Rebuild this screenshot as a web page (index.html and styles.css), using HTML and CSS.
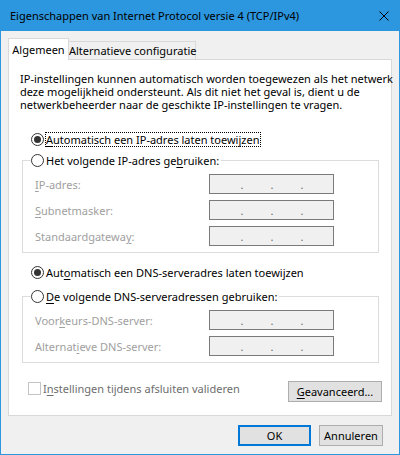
FILE: index.html
```html
<!DOCTYPE html>
<html lang="nl">
<head>
<meta charset="utf-8">
<title>Eigenschappen van Internet Protocol versie 4 (TCP/IPv4)</title>
<link rel="stylesheet" href="styles.css">
</head>
<body>
<div class="window">
  <div class="titlebar">
    <span class="title">Eigenschappen van Internet Protocol versie 4 (TCP/IPv4)</span>
    <svg class="close" width="10" height="10" viewBox="0 0 10 10"><path d="M0.5 0.5 L9.5 9.5 M9.5 0.5 L0.5 9.5" stroke="#000" stroke-width="1" fill="none"/></svg>
  </div>
  <div class="client">
    <div class="tabs">
      <div class="tab active">Algemeen</div>
      <div class="tab">Alternatieve configuratie</div>
    </div>
    <div class="panel">
      <p class="intro">IP-instellingen kunnen automatisch worden toegewezen als het netwerk<br>deze mogelijkheid ondersteunt. Als dit niet het geval is, dient u de<br>netwerkbeheerder naar de geschikte IP-instellingen te vragen.</p>

      <div class="radio-row"><span class="radio checked"></span><span class="focus"><u>A</u>utomatisch een IP-adres laten toewijzen</span></div>

      <fieldset class="group">
        <legend><span class="radio"></span><span>Het volgende IP-adres ge<u>b</u>ruiken:</span></legend>
        <div class="field"><span class="label"><u>I</u>P-adres:</span><span class="ipbox"><span>.</span><span>.</span><span>.</span></span></div>
        <div class="field"><span class="label"><u>S</u>ubnetmasker:</span><span class="ipbox"><span>.</span><span>.</span><span>.</span></span></div>
        <div class="field"><span class="label">Standaardgatewa<u>y</u>:</span><span class="ipbox"><span>.</span><span>.</span><span>.</span></span></div>
      </fieldset>

      <div class="radio-row dns"><span class="radio checked"></span><span>Aut<u>o</u>matisch een DNS-serveradres laten toewijzen</span></div>

      <fieldset class="group second">
        <legend><span class="radio"></span><span><u>D</u>e volgende DNS-serveradressen gebruiken:</span></legend>
        <div class="field"><span class="label">Voor<u>k</u>eurs-DNS-server:</span><span class="ipbox"><span>.</span><span>.</span><span>.</span></span></div>
        <div class="field"><span class="label">Alternat<u>i</u>eve DNS-server:</span><span class="ipbox"><span>.</span><span>.</span><span>.</span></span></div>
      </fieldset>

      <div class="bottom-row">
        <div class="check-row"><span class="checkbox"></span><span class="check-label">I<u>n</u>stellingen tijdens afsluiten valideren</span></div>
        <div class="btn adv"><u>G</u>eavanceerd...</div>
      </div>
    </div>
    <div class="footer">
      <div class="btn ok">OK</div>
      <div class="btn cancel">Annuleren</div>
    </div>
  </div>
</div>
</body>
</html>
```

FILE: styles.css
```css
* { box-sizing: border-box; }
html, body { margin: 0; padding: 0; }
body {
  width: 400px;
  height: 455px;
  font-family: "Noto Sans", "Open Sans", sans-serif;
  font-size: 11px;
  color: #000;
  background: #fff;
  overflow: hidden;
  white-space: nowrap;
}
u { text-decoration: underline; text-underline-offset: 2px; }

.window {
  width: 400px;
  height: 455px;
  border: 1px solid #2c96de;
  border-top: 0;
  background: #f0f0f0;
  display: flex;
  flex-direction: column;
}
.titlebar {
  height: 31px;
  flex: none;
  background: #2c96de;
  display: flex;
  align-items: center;
  justify-content: space-between;
  padding: 0 10px 0 9px;
}
.title { font-size: 11px; line-height: 14px; }
.close { display: block; }

.client { padding: 7px 7px 0 7px; }

.tabs {
  display: flex;
  align-items: flex-end;
  height: 21px;
}
.tab {
  height: 18px;
  width: 127px;
  border: 1px solid #d9d9d9;
  border-left: 0;
  border-bottom: 0;
  background: #f0f0f0;
  text-align: center;
  line-height: 17px;
}
.tab.active {
  position: relative;
  z-index: 1;
  width: 61px;
  height: 22px;
  margin-bottom: -1px;
  border-left: 1px solid #d9d9d9;
  background: #fff;
  line-height: 21px;
}

.panel {
  height: 357px;
  background: #fff;
  border: 1px solid #d9d9d9;
  display: flex;
  flex-direction: column;
}
.intro {
  margin: 12px 0 0 11px;
  line-height: 13px;
}
.radio-row {
  margin: 18px 0 0 22px;
  height: 20px;
  display: flex;
  align-items: center;
}
.radio-row.dns { margin-top: 9px; }
.radio {
  width: 13px;
  height: 13px;
  border: 1px solid #333;
  border-radius: 50%;
  background: #fff;
  margin-right: 2px;
  flex: none;
  display: flex;
  align-items: center;
  justify-content: center;
}
.radio.checked::after {
  content: "";
  width: 7px;
  height: 7px;
  border-radius: 50%;
  background: #333;
}
.focus {
  outline: 1px dotted #000;
  outline-offset: 0;
  line-height: 13px;
  padding: 0 1px 0 0;
}

.group {
  margin: 1px 12px 0 13px;
  border: 1px solid #dcdcdc;
  padding: 4px 0 6px 12px;
  min-inline-size: 0;
}
.group.second { margin-top: 4px; }
.group legend {
  padding: 0 2px 0 0;
  margin-left: -4px;
  height: 20px;
  display: flex;
  align-items: center;
}
.field {
  display: flex;
  align-items: center;
  height: 20px;
  color: #a0a0a0;
}
.field + .field { margin-top: 6px; }
.label { width: 174px; flex: none; }
.ipbox {
  width: 125px;
  height: 20px;
  border: 1px solid #7a7a7a;
  background: #f0f0f0;
  display: flex;
  padding-left: 17px;
  color: #6d6d6d;
  line-height: 19px;
}
.ipbox span { width: 30px; text-align: center; }

.bottom-row {
  margin: 18px 9px 0 19px;
  display: flex;
  justify-content: space-between;
  align-items: flex-start;
}
.check-row {
  display: flex;
  align-items: center;
  height: 13px;
  margin-top: 1px;
}
.checkbox {
  width: 13px;
  height: 13px;
  border: 1px solid #c4c4c4;
  background: #fff;
  margin-right: 2px;
}
.check-label { color: #6d6d6d; }

.btn {
  height: 21px;
  background: #e1e1e1;
  border: 1px solid #adadad;
  display: flex;
  align-items: center;
  justify-content: center;
}
.adv { width: 94px; }

.footer {
  margin-top: 9px;
  padding-right: 9px;
  display: flex;
  justify-content: flex-end;
  gap: 8px;
}
.ok { width: 73px; border: 2px solid #0078d7; }
.cancel { width: 64px; }
```
